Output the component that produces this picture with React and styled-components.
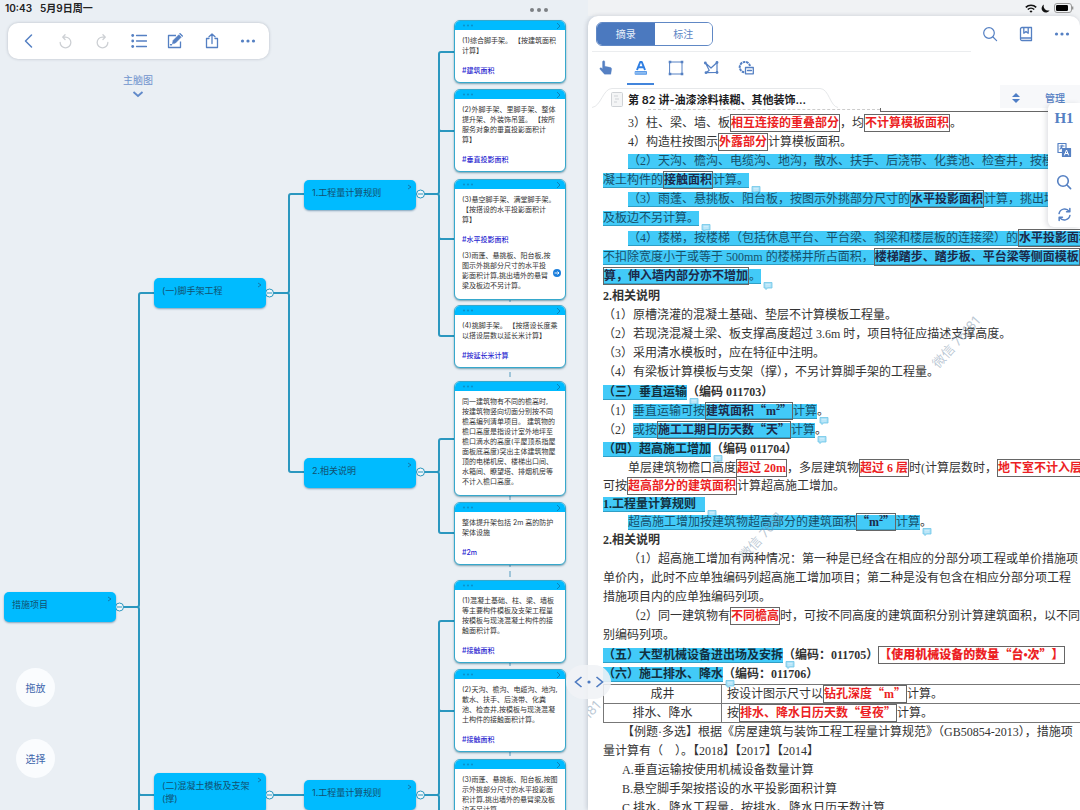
import React from 'react';
import styled, { createGlobalStyle, css } from 'styled-components';

const Global = createGlobalStyle`
  *, *::before, *::after { box-sizing: border-box; }
  body {
    margin: 0;
    font-family: Inter, "Noto Sans CJK SC", sans-serif;
    background: #eaeff4;
    color: #222;
  }
  button { font: inherit; border: 0; background: none; padding: 0; margin: 0; color: inherit; cursor: pointer; }
  svg { display: block; flex: none; }
`;

const BLUE = '#5580c3';
const LINE = '#2b97bf';

/* ---------- shell ---------- */
const Page = styled.div`
  display: flex;
  flex-direction: column;
  height: 100vh;
  overflow: hidden;
`;
const StatusBar = styled.header`
  display: grid;
  grid-template-columns: 588fr 492fr;
  flex: none;
  height: 16px;
  font-size: 10px;
  line-height: 16px;
  font-weight: 600;
`;
const StatusLeft = styled.div`
  display: flex;
  gap: 8px;
  padding-left: 5px;
  white-space: nowrap;
`;
const WindowDots = styled.span`
  display: flex;
  align-items: center;
  gap: 3px;
  margin-left: auto;
  padding: 4px 40px 0 0;
`;
const WindowDot = styled.i`
  width: 4px;
  height: 4px;
  border-radius: 50%;
  background: #7c8084;
`;
const StatusRight = styled.div`
  display: flex;
  align-items: center;
  justify-content: flex-end;
  gap: 4px;
  padding-right: 6px;
  background: #f0f2f4;
`;
const Main = styled.main`
  flex: 1;
  min-height: 0;
  display: grid;
  grid-template-columns: minmax(0, 588fr) minmax(0, 492fr);
  background: linear-gradient(to right, #eaeff4 60%, #f0f2f4 60%);
`;

/* ---------- mind map ---------- */
const MapPane = styled.section`
  position: relative;
`;
const Canvas = styled.div`
  position: absolute;
  inset: 0;
  overflow: hidden;
`;
const Wires = styled.svg`
  position: absolute;
  left: 0;
  top: 0;
`;
const MapBar = styled.nav`
  position: relative;
  display: flex;
  justify-content: space-between;
  align-items: center;
  width: 261px;
  height: 36px;
  margin: 7px 0 0 8px;
  padding: 0 11px;
  border-radius: 10px;
  background: #fff;
  box-shadow: 0 0 3px rgba(60, 70, 90, 0.3);
  color: ${BLUE};
`;
const IconButton = styled.button`
  display: grid;
  place-items: center;
  width: 20px;
  height: 24px;
  color: ${(p) => (p.$dim ? '#cdd0d4' : p.$hot ? '#2f7fe2' : 'inherit')};
`;
const MapTitle = styled.button`
  position: relative;
  display: flex;
  flex-direction: column;
  align-items: center;
  width: 40px;
  margin: 14px 0 0 118px;
  font-size: 10px;
  line-height: 15px;
  color: #6f93cd;
`;
const Topic = styled.div`
  position: absolute;
  left: ${(p) => p.$x}px;
  top: ${(p) => p.$y}px;
  width: 112px;
  min-height: 30px;
  padding: 6px 16px 8px 8px;
  border-radius: 5px;
  background: #00bbff;
  box-shadow: 0 1px 2px rgba(0, 70, 120, 0.45);
  color: #12506f;
  font-size: 9px;
  line-height: 13px;
  white-space: pre;
`;
const TopicArrow = styled.svg`
  position: absolute;
  top: 4px;
  right: 4px;
`;
const Card = styled.article`
  position: absolute;
  left: 454px;
  top: ${(p) => p.$y}px;
  width: 112px;
  border: 1px solid #36a8cc;
  border-radius: 6px;
  overflow: hidden;
  background: #fff;
  box-shadow: 0 1px 2px rgba(0, 80, 110, 0.5);
  font-size: 7px;
  line-height: 10px;
  color: #333;
`;
const CardHead = styled.header`
  display: flex;
  align-items: center;
  justify-content: space-between;
  height: 9px;
  padding: 0 4px 0 7px;
  background: #00bbff;
`;
const CardBody = styled.div`
  position: relative;
  padding: 6px 0 ${(p) => (p.$tagged ? 6 : 8)}px 7px;
  white-space: pre;
`;
const Tag = styled.p`
  margin: 10px 0 0;
  font-weight: 500;
  color: #2a1fd0;
`;
const Extra = styled.p`
  margin: 6px 0 2px;
`;
const LinkBadge = styled.svg`
  position: absolute;
  right: 4px;
  bottom: 22px;
`;
const RoundButton = styled.button`
  position: absolute;
  left: 16px;
  bottom: ${(p) => p.$bottom}px;
  width: 39px;
  height: 39px;
  border-radius: 50%;
  background: #fafcfe;
  color: #3d66ac;
  font-size: 10px;
`;
const SplitHandle = styled.button`
  position: absolute;
  z-index: 3;
  right: -23px;
  bottom: 111px;
  display: grid;
  place-items: center;
  width: 45px;
  height: 34px;
  border-radius: 17px;
  background: rgba(240, 243, 246, 0.88);
  color: #4c79c0;
`;

/* ---------- document panel ---------- */
const DocPane = styled.section`
  position: relative;
  display: flex;
  flex-direction: column;
  min-height: 0;
  border-radius: 10px 10px 0 0;
  background: #fff;
  box-shadow: -1px 0 4px rgba(60, 70, 90, 0.22);
  color: ${BLUE};
`;
const TopRow = styled.div`
  flex: none;
  display: flex;
  align-items: center;
  height: 35px;
  padding: 0 8px;
`;
const Segments = styled.div`
  display: grid;
  grid-template-columns: 1fr 1fr;
  width: 117px;
  height: 24px;
  border: 1px solid #6088c5;
  border-radius: 6px;
  overflow: hidden;
`;
const Segment = styled.button`
  font-size: 10px;
  background: ${(p) => (p.$on ? '#4b79bf' : '#fff')};
  color: ${(p) => (p.$on ? '#e8effa' : '#5b84c4')};
`;
const TopIcons = styled.div`
  display: flex;
  gap: 16px;
  margin-left: auto;
`;
const Rule = styled.hr`
  flex: none;
  width: 77%;
  height: 1px;
  margin: 0 0 0 4px;
  border: 0;
  background: #ebedef;
`;
const ToolRow = styled.div`
  flex: none;
  display: flex;
  gap: 8px;
  height: 33px;
  padding-left: 4px;
`;
const Tool = styled.button`
  display: grid;
  place-items: center;
  width: 27px;
  height: 33px;
  border-bottom: 2px solid ${(p) => (p.$on ? '#4285dc' : 'transparent')};
  color: ${(p) => (p.$on ? '#2f7fe2' : 'inherit')};
`;
const TabRow = styled.div`
  flex: none;
  display: flex;
  justify-content: space-between;
  height: 23px;
`;
const FileTab = styled.div`
  position: relative;
  display: flex;
  align-items: center;
  gap: 5px;
  padding: 5px 0 0 23px;
  color: #1d1d1f;
  font-size: 11px;
  font-weight: 600;
  white-space: nowrap;
`;
const TabShape = styled.svg`
  position: absolute;
  left: 4px;
  top: 3px;
`;
const Manage = styled.button`
  display: flex;
  align-items: center;
  gap: 24px;
  width: 80px;
  padding: 2px 0 0 11px;
  background: #f7f8fa;
  font-size: 10px;
  font-weight: 500;
`;
const SideBar = styled.aside`
  position: absolute;
  z-index: 2;
  right: 0;
  top: 87px;
  display: flex;
  flex-direction: column;
  align-items: center;
  gap: 8px;
  width: 32px;
  padding: 3px 0 1px;
  border-radius: 6px 0 0 6px;
  background: #fff;
  box-shadow: -2px 1px 5px rgba(60, 70, 90, 0.16);
`;
const HeadingButton = styled(IconButton)`
  font-family: "Liberation Serif", serif;
  font-size: 15px;
  font-weight: 700;
`;
const Doc = styled.article`
  position: relative;
  flex: 1;
  min-height: 0;
  overflow: hidden;
  padding: 6px 0 0 15px;
  font-family: "Liberation Serif", "Noto Sans CJK SC", serif;
  font-size: 12px;
  color: #333;
`;
const CutLine = styled.div`
  position: absolute;
  top: 0;
  left: 60px;
  right: 0;
  display: flex;
  height: 4px;
`;
const CutText = styled.i`
  width: 232px;
  height: 2px;
  border-bottom: 1px dashed #ccc;
`;
const CutBox = styled.i`
  flex: 1;
  border: solid #666;
  border-width: 0 0 1px 1px;
`;
const Section = styled.section`
  padding-bottom: ${(p) => (p.$flush ? 0 : 1)}px;
  line-height: ${(p) => (p.$tight ? 18 : 19)}px;
`;
const Line = styled.p`
  margin: 0;
  padding-left: ${(p) => p.$in || 0}px;
  height: 1lh;
  white-space: pre;
  font-weight: ${(p) => (p.$bold ? 700 : 400)};
`;
const Mark = styled.mark`
  position: relative;
  border-bottom: 1px solid #2f9fc6;
  background: #42caf8;
  color: #17506b;
  ${(p) => p.$strong && css`
    color: #12303f;
    font-weight: 700;
  `}
`;
const Boxed = styled.strong`
  padding: 1px 0;
  border: 1px solid #666;
  color: ${(p) => (p.$red ? '#ec1f24' : '#1d2a4a')};
  text-spacing-trim: space-all;
`;
const Cjk = styled.span`
  font-family: "Noto Sans CJK SC", sans-serif;
  line-height: 1;
`;
const Bubble = styled.svg`
  position: absolute;
  left: calc(100% + 2px);
  bottom: -7px;
`;
const Sup = styled.sup`
  font-size: 8px;
  line-height: 1;
`;
const Rates = styled.table`
  width: calc(100% + 12px);
  border-collapse: collapse;
  table-layout: fixed;
  line-height: 18px;
  white-space: nowrap;
  td, th { height: 19px; padding: 0; border: 1px solid #777; font-weight: 400; }
  th { width: 118px; text-align: center; }
  td { padding-left: 5px; }
`;
const Watermark = styled.span`
  position: absolute;
  left: ${(p) => p.$x}px;
  top: ${(p) => p.$y}px;
  font-family: Inter, "Noto Sans CJK SC", sans-serif;
  font-size: 13px;
  line-height: 16px;
  color: rgba(120, 145, 170, 0.5);
  white-space: nowrap;
  transform: rotate(-48deg);
`;

/* ---------- icons ---------- */
const Icon = ({ s = 16, w = 1.3, children }) => (
  <svg width={s} height={s} viewBox="0 0 16 16" fill="none" stroke="currentColor" strokeWidth={w} strokeLinecap="round" strokeLinejoin="round" aria-hidden="true">{children}</svg>
);
const Dots = () => (
  <Icon><g fill="currentColor" stroke="none"><circle cx="2.5" cy="8" r="1.6" /><circle cx="8" cy="8" r="1.6" /><circle cx="13.5" cy="8" r="1.6" /></g></Icon>
);
const SearchIcon = ({ w }) => <Icon w={w}><circle cx="7" cy="7" r="5.3" /><path d="M11 11l3.6 3.6" /></Icon>;
const Note = () => (
  <Bubble width="10" height="8" viewBox="0 0 10 8" aria-hidden="true">
    <path d="M1 .5h8v5.5H4.5L3 7.6 2.600 6H1z" fill="#a5def5" stroke="#6fc6e8" strokeWidth=".8" />
    <path d="M2.500 2.300h5M2.500 4h5" stroke="#e9f8ff" strokeWidth=".7" />
  </Bubble>
);
const Q = ({ children }) => <><Cjk>“</Cjk>{children}<Cjk>”</Cjk></>;
const M2 = () => <Q>m<Sup>2</Sup></Q>;

/* ---------- data ---------- */
const topics = [
  { x: 4, y: 576, text: '措施项目' },
  { x: 154, y: 262, text: '(一)脚手架工程' },
  { x: 304, y: 164, text: '1.工程量计算规则' },
  { x: 304, y: 442, text: '2.相关说明' },
  { x: 154, y: 757, text: '(二)混凝土模板及支架\n(撑)' },
  { x: 304, y: 764, text: '1.工程量计算规则' },
];
const cards = [
  { y: 4, text: '(1)综合脚手架。 【按建筑面积\n计算】', tag: '#建筑面积' },
  { y: 73, text: '(2)外脚手架、里脚手架、整体\n提升架、外装饰吊篮。 【按所\n服务对象的垂直投影面积计\n算】', tag: '#垂直投影面积' },
  { y: 163, text: '(3)悬空脚手架、满堂脚手架。\n【按搭设的水平投影面积计\n算】', tag: '#水平投影面积', extra: '(3)雨蓬、悬挑板、阳台板,按\n图示外挑部分尺寸的水平投\n影面积计算,挑出墙外的悬臂\n梁及板边不另计算。' },
  { y: 289, text: '(4)挑脚手架。 【按搭设长度乘\n以搭设层数以延长米计算】', tag: '#按延长米计算' },
  { y: 365, text: '同一建筑物有不同的檐高时,\n按建筑物竖向切面分别按不同\n檐高编列清单项目。 建筑物的\n檐口高度是指设计室外地坪至\n檐口滴水的高度(平屋顶系指屋\n面板底高度)突出主体建筑物屋\n顶的电梯机房、楼梯出口间、\n水箱间、瞭望塔、排烟机房等\n不计入檐口高度。' },
  { y: 486, text: '整体提升架包括 2m 高的防护\n架体设施', tag: '#2m' },
  { y: 564, text: '(1)混凝土基础、柱、梁、墙板\n等主要构件模板及支架工程量\n按模板与现浇混凝土构件的接\n触面积计算。', tag: '#接触面积' },
  { y: 653, text: '(2)天沟、檐沟、电缆沟、地沟,\n散水、扶手、后浇带、化粪\n池、检查井,按模板与现浇混凝\n土构件的接触面积计算。', tag: '#接触面积' },
  { y: 743, text: '(3)雨蓬、悬挑板、阳台板,按图\n示外挑部分尺寸的水平投影面\n积计算,挑出墙外的悬臂梁及板\n边不另计算。', tag: '#水平投影面积' },
];
const joints = [[119, 591], [269, 277], [420, 178], [420, 456], [269, 779], [420, 779]];
const wires = [
  'M123 591H137q2 0 2 -2V279q0 -2 2 -2H154',
  'M137 591q2 0 2 2V777q0 2 2 2H154M139 777V900',
  'M273 277H287q2 0 2 -2V180q0 -2 2 -2H304M287 277q2 0 2 2V454q0 2 2 2H304',
  'M424 178H437q2 0 2 -2V38q0 -2 2 -2H454M437 178q2 0 2 2V318q0 2 2 2H454M439 113q0 2 2 2H454M439 221q0 2 2 2H454',
  'M424 456H437q2 0 2 -2V425q0 -2 2 -2H454M437 456q2 0 2 2V515q0 2 2 2H454',
  'M273 779H304',
  'M424 779H437q2 0 2 -2V607q0 -2 2 -2H454M439 693q0 2 2 2H454M437 779q2 0 2 2V900',
];

function MindMap() {
  return (
    <MapPane>
      <Canvas>
        <Wires width="588" height="900" fill="none" aria-hidden="true">
          <path d="M510 283v3M510 356v5M510 480v4M510 549v2M510 555v6M510 647v3M510 736v4" stroke="#86b8cf" strokeWidth="1.500" />
          {wires.map((d) => <path key={d} d={d} stroke={LINE} strokeWidth="2" />)}
          {joints.map(([x, y]) => (
            <g key={`${x}-${y}`} stroke={LINE}>
              <circle cx={x + 0.5} cy={y} r="4" fill="#f4f8fb" />
              <path d={`M${x - 2} ${y}h5`} />
            </g>
          ))}
        </Wires>
        {topics.map((t) => (
          <Topic key={`${t.x}-${t.y}`} $x={t.x} $y={t.y}>
            {t.text}
            <TopicArrow width="5" height="6" fill="none" stroke="#1279aa"><path d="M1 1l3 2-3 2" /></TopicArrow>
          </Topic>
        ))}
        {cards.map((c) => (
          <Card key={c.y} $y={c.y}>
            <CardHead>
              <svg width="12" height="3" fill="#0a93cc"><circle cx="2" cy="1.500" r="1.100" /><circle cx="6" cy="1.500" r="1.100" /><circle cx="10" cy="1.500" r="1.100" /></svg>
              <svg width="5" height="8" fill="none" stroke="#0a83ba"><path d="M1 1l3 3-3 3" /></svg>
            </CardHead>
            <CardBody $tagged={!!c.tag}>
              {c.text}
              {c.tag && <Tag>{c.tag}</Tag>}
              {c.extra && <Extra>{c.extra}</Extra>}
              {c.extra && (
                <LinkBadge width="8" height="8" viewBox="0 0 8 8"><circle cx="4" cy="4" r="4" fill="#1c7fdc" /><path d="M1.500 4h4.500M4.500 2.500L6 4 4.500 5.500" stroke="#fff" strokeWidth=".9" fill="none" /></LinkBadge>
              )}
            </CardBody>
          </Card>
        ))}
      </Canvas>
      <MapBar aria-label="脑图工具">
        <IconButton aria-label="返回"><Icon><path d="M10.500 2L4.500 8l6 6" strokeWidth="1.5" /></Icon></IconButton>
        <IconButton $dim aria-label="撤销"><Icon s={15} w={1.4}><path d="M2.300 9a5.700 5.700 0 1 0 5.700-5.700H5M7.500 .8L5 3.300l2.500 2.500" /></Icon></IconButton>
        <IconButton $dim aria-label="重做"><Icon s={15} w={1.4}><path d="M13.700 9A5.700 5.700 0 1 1 8 3.300h3M8.500 .8L11 3.300 8.500 5.800" /></Icon></IconButton>
        <IconButton aria-label="大纲"><Icon><path d="M5.500 2.500h10M5.500 8h10M5.500 13.500h10" /><g fill="currentColor" stroke="none"><circle cx="1.700" cy="2.500" r="1.400" /><circle cx="1.700" cy="8" r="1.400" /><circle cx="1.700" cy="13.500" r="1.400" /></g></Icon></IconButton>
        <IconButton aria-label="编辑"><Icon><path d="M9 2.500H1.500v12h12V8.500" strokeLinecap="butt" /><path d="M5.500 10.500l.6-3L11.800 1.800l2.400 2.400L8.500 9.900z" fill="currentColor" strokeWidth=".6" /><path d="M13 .7l2.300 2.300M3.500 11.700h1" strokeWidth="1.4" /></Icon></IconButton>
        <IconButton aria-label="分享"><Icon><path d="M5 5.500H2.500v9h11v-9H11M8 10.500V1M5 3.800L8 1l3 2.800" /></Icon></IconButton>
        <IconButton aria-label="更多"><Dots /></IconButton>
      </MapBar>
      <MapTitle>
        主脑图
        <svg width="12" height="12" fill="none" stroke="#6089c9" strokeWidth="1.8"><path d="M1.500 4L6 8l4.500-4" /></svg>
      </MapTitle>
      <RoundButton $bottom={103}>拖放</RoundButton>
      <RoundButton $bottom={32}>选择</RoundButton>
      <SplitHandle aria-label="调整分栏">
        <svg width="30" height="12" fill="none" stroke="currentColor" strokeWidth="1.600"><path d="M7.500 1L1.500 6l6 5M22.500 1l6 5-6 5" /><circle cx="15" cy="6" r=".8" /></svg>
      </SplitHandle>
    </MapPane>
  );
}

function DocText() {
  return (
    <Doc lang="zh-CN">
      <CutLine aria-hidden="true"><CutText /><CutBox /></CutLine>
      <Section>
        <Line $in={25}>3）柱、梁、墙、板<Boxed $red>相互连接的重叠部分</Boxed>，均<Boxed $red>不计算模板面积</Boxed>。</Line>
        <Line $in={25}>4）构造柱按图示<Boxed $red>外露部分</Boxed>计算模板面积。</Line>
        <Line $in={25}><Mark>（2）天沟、檐沟、电缆沟、地沟，散水、扶手、后浇带、化粪池、检查井，按模板</Mark></Line>
        <Line><Mark>凝土构件的<Boxed>接触面积</Boxed>计算。<Note /></Mark></Line>
        <Line $in={25}><Mark>（3）雨蓬、悬挑板、阳台板，按图示外挑部分尺寸的<Boxed>水平投影面积</Boxed>计算，挑出墙</Mark></Line>
        <Line><Mark>及板边不另计算。<Note /></Mark></Line>
      </Section>
      <Section>
        <Line $in={25}><Mark>（4）楼梯，按楼梯（包括休息平台、平台梁、斜梁和楼层板的连接梁）的<Boxed>水平投影面积</Boxed></Mark></Line>
        <Line><Mark>不扣除宽度小于或等于 500mm 的楼梯井所占面积，<Boxed>楼梯踏步、踏步板、平台梁等侧面模板</Boxed></Mark></Line>
        <Line><Mark><Boxed>算，伸入墙内部分亦不增加</Boxed>。<Note /></Mark></Line>
      </Section>
      <Section>
        <Line $bold>2.相关说明</Line>
        <Line>（1）原槽浇灌的混凝土基础、垫层不计算模板工程量。</Line>
        <Line>（2）若现浇混凝土梁、板支撑高度超过 3.6m 时，项目特征应描述支撑高度。</Line>
        <Line>（3）采用清水模板时，应在特征中注明。</Line>
        <Line>（4）有梁板计算模板与支架（撑），不另计算脚手架的工程量。</Line>
      </Section>
      <Section $flush>
        <Line $bold><Mark $strong>（三）垂直运输<Note /></Mark>（编码 011703）</Line>
        <Line>（1）<Mark>垂直运输可按<Boxed>建筑面积<M2 /></Boxed>计算<Note /></Mark>。</Line>
        <Line>（2）<Mark>或按<Boxed>施工工期日历天数<Q>天</Q></Boxed>计算<Note /></Mark>。</Line>
        <Line $bold><Mark $strong>（四）超高施工增加<Note /></Mark>（编码 011704）</Line>
      </Section>
      <Section $tight>
        <Line $in={25}>单层建筑物檐口高度<Boxed $red>超过 20m</Boxed>，多层建筑物<Boxed $red>超过 6 层</Boxed>时(计算层数时，<Boxed $red>地下室不计入层数</Boxed></Line>
        <Line>可按<Boxed $red>超高部分的建筑面积</Boxed>计算超高施工增加。</Line>
        <Line $bold><Mark $strong>1.工程量计算规则{'   '}<Note /></Mark></Line>
        <Line $in={25}><Mark>超高施工增加按建筑物超高部分的建筑面积<Boxed><M2 /></Boxed>计算<Note /></Mark>。</Line>
        <Line $bold>2.相关说明</Line>
      </Section>
      <Section>
        <Line $in={25}>（1）超高施工增加有两种情况：第一种是已经含在相应的分部分项工程或单价措施项</Line>
        <Line>单价内，此时不应单独编码列超高施工增加项目；第二种是没有包含在相应分部分项工程</Line>
        <Line>措施项目内的应单独编码列项。</Line>
        <Line $in={25}>（2）同一建筑物有<Boxed $red>不同檐高</Boxed>时，可按不同高度的建筑面积分别计算建筑面积，以不同</Line>
        <Line>别编码列项。</Line>
      </Section>
      <Section $flush>
        <Line $bold><Mark $strong>（五）大型机械设备进出场及安拆<Note /></Mark>（编码：011705）<Boxed $red>【使用机械设备的数量<Q>台•次</Q>】</Boxed></Line>
        <Line $bold><Mark $strong>（六）施工排水、降水<Note /></Mark>（编码：011706）</Line>
      </Section>
      <Rates>
        <tbody>
          <tr><th scope="row">成井</th><td>按设计图示尺寸以<Boxed $red>钻孔深度<Q>m</Q></Boxed>计算。</td></tr>
          <tr><th scope="row">排水、降水</th><td>按<Boxed $red>排水、降水日历天数<Q>昼夜</Q></Boxed>计算。</td></tr>
        </tbody>
      </Rates>
      <Section>
        <Line $in={19}>【例题·多选】根据《房屋建筑与装饰工程工程量计算规范》（GB50854-2013），措施项</Line>
        <Line>量计算有（    ）。【2018】【2017】【2014】</Line>
        <Line $in={19}>A.垂直运输按使用机械设备数量计算</Line>
        <Line $in={19}>B.悬空脚手架按搭设的水平投影面积计算</Line>
        <Line $in={19}>C.排水、降水工程量，按排水、降水日历天数计算</Line>
      </Section>
      <Watermark $x={336} $y={226} aria-hidden="true">微信 76181</Watermark>
      <Watermark $x={144} $y={420} aria-hidden="true">微信 76网</Watermark>
      <Watermark $x={-6} $y={594} aria-hidden="true">181</Watermark>
    </Doc>
  );
}

export default function App() {
  return (
    <Page lang="zh-CN">
      <Global />
      <StatusBar>
        <StatusLeft>
          <span>10:43</span><span>5月9日周一</span>
          <WindowDots><WindowDot /><WindowDot /><WindowDot /></WindowDots>
        </StatusLeft>
        <StatusRight>
          <svg width="12" height="9" viewBox="0 0 12 9" fill="none" stroke="#111" strokeWidth="1.600"><path d="M.8 3.300a7.500 7.500 0 0 1 10.400 0M2.800 5.500a4.600 4.600 0 0 1 6.400 0" /><path d="M4.500 7.200L6 8.800l1.500-1.600a2.200 2.200 0 0 0-3 0z" fill="#111" stroke="none" /></svg>
          <svg width="9" height="9" viewBox="0 0 9 9"><path d="M3 .6a4.200 4.200 0 1 0 5.600 5.600A4.300 4.300 0 0 1 3 .6z" fill="#111" /></svg>
          <svg width="20" height="10" viewBox="0 0 20 10"><rect x=".5" y=".5" width="17" height="9" rx="2.500" fill="none" stroke="#999" /><rect x="2" y="2" width="12" height="6" rx="1.200" fill="#000" /><path d="M18.700 3.500v3" stroke="#888" strokeWidth="1.200" /></svg>
        </StatusRight>
      </StatusBar>
      <Main>
        <MindMap />
        <DocPane>
          <TopRow>
            <Segments>
              <Segment $on aria-pressed="true">摘录</Segment>
              <Segment aria-pressed="false">标注</Segment>
            </Segments>
            <TopIcons>
              <IconButton aria-label="搜索"><SearchIcon w={1.2} /></IconButton>
              <IconButton aria-label="书签"><Icon w={1.2}><path d="M4 1.500h9.500v13H4a1.500 1.500 0 0 1-1.500-1.500V3A1.500 1.500 0 0 1 4 1.500zM2.500 12h11M5.800 1.700v5.500L8 5.500l2.200 1.700V1.700" strokeWidth="1.3" /></Icon></IconButton>
              <IconButton aria-label="更多"><Dots /></IconButton>
            </TopIcons>
          </TopRow>
          <Rule />
          <ToolRow>
            <Tool aria-label="手型">
              <Icon><path d="M4.500 1.800c0-1.500 2.300-1.500 2.300 0v4.500l5.200 1c1.300.3 1.800 1 1.600 2.200l-.8 4.700H6.500L2 9.200c-.7-1.200.8-2 1.600-1.200l.9.9z" fill="currentColor" strokeWidth=".3" /></Icon>
            </Tool>
            <Tool $on aria-label="文字高亮">
              <Icon><path d="M4 10L7.200 2h1.600L12 10M5.300 7.300h5.400" strokeWidth="2" strokeLinecap="butt" /><path d="M2.500 11.500h11v2.800h-11z" fill="#8dbcf0" strokeWidth=".7" /></Icon>
            </Tool>
            <Tool aria-label="矩形">
              <Icon w={1}><path d="M2 2h12v12H2z" /><g fill="currentColor" stroke="none"><path d="M.7.7h2.600v2.600H.7zM12.700.7h2.600v2.600h-2.600zM.7 12.700h2.600v2.600H.7zM12.700 12.700h2.600v2.600h-2.600z" /></g></Icon>
            </Tool>
            <Tool aria-label="套索">
              <Icon w={1.200}><path d="M2.500 3l5.500 5 6-5.500v10L3.200 12.700l3-2.500z" /><g fill="currentColor" stroke="none"><circle cx="2.300" cy="3" r="1.400" /><circle cx="14" cy="2.500" r="1.400" /><circle cx="14" cy="12.500" r="1.400" /><circle cx="3" cy="12.700" r="1.400" /></g></Icon>
            </Tool>
            <Tool aria-label="卡片设置">
              <Icon><path d="M6.300 12.300A5.200 5.200 0 1 1 12 6" strokeWidth="2" strokeDasharray="2.600 .7" strokeLinecap="butt" /><path d="M7.500 7.500h7.800v6.300H7.500zM9.500 10.500h4" fill="#fff" strokeWidth="1.300" /></Icon>
            </Tool>
          </ToolRow>
          <TabRow>
            <FileTab>
              <TabShape width="246" height="20" fill="none" stroke="#e6e8ea"><path d="M0 19.500c9-1 11-19 20-19h208c9 0 10 18 18 19" /></TabShape>
              <svg width="12" height="15" fill="#f4f5f6" stroke="#cfd2d6"><rect x=".5" y=".5" width="11" height="14" rx="1" /><path d="M3 4h4M4 7h4M3 10h3" /></svg>
              第 82 讲-油漆涂料裱糊、其他装饰...
            </FileTab>
            <Manage>
              <svg width="10" height="12" fill="#4f7ec6"><path d="M5 1l4 4H1zM5 11L1 7h8z" /></svg>
              管理
            </Manage>
          </TabRow>
          <DocText />
          <SideBar>
            <HeadingButton aria-label="一级标题">H1</HeadingButton>
            <IconButton aria-label="翻译"><Icon w={1.2}><path d="M6 10.500H2v-9h8V6M4 4h4M6 3v1c0 1.500-1 2.500-2 3M5 5.500l2 1.500" /><path d="M6.500 6.500h8v8h-8z" fill="currentColor" /><path d="M8.500 13l2-5 2 5M9.200 11.500h2.600" stroke="#fff" strokeWidth="1" /></Icon></IconButton>
            <IconButton aria-label="查找"><SearchIcon w={1.6} /></IconButton>
            <IconButton aria-label="刷新"><Icon s={15} w={1.6}><path d="M2.200 7A6 6 0 0 1 13 4.700M13.800 9A6 6 0 0 1 3 11.300M13.700 1.500v3.500h-3.500M2.300 14.500V11h3.500" /></Icon></IconButton>
          </SideBar>
        </DocPane>
      </Main>
    </Page>
  );
}
